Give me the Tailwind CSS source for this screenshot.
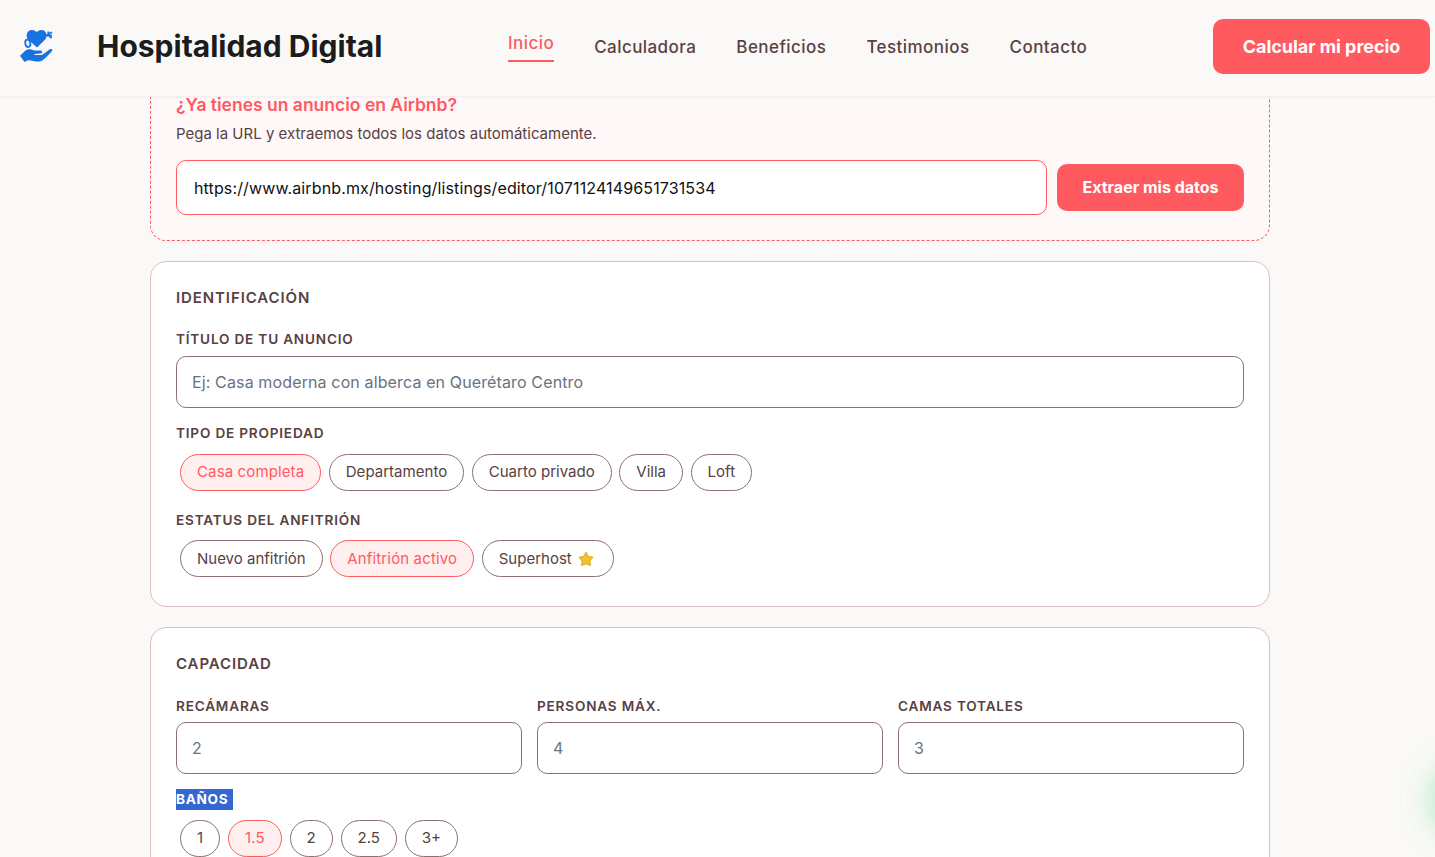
<!DOCTYPE html>
<html lang="es">
  <head>
    <meta charset="utf-8" />
    <title>Hospitalidad Digital</title>
    <meta name="viewport" content="width=device-width, initial-scale=1" />
    <script src="https://cdn.jsdelivr.net/npm/@tailwindcss/browser@4"></script>
  </head>

  <body class="h-screen overflow-hidden bg-[#faf9f7] font-['Inter',sans-serif] text-[#594142]">
    <header class="relative z-10 flex h-[97px] items-start border-b border-[#f3f0ef] bg-[#fbf9f8] pl-5 shadow-[0_1px_2px_rgba(0,0,0,0.03)]">
      <!-- Logo -->
      <svg class="mt-[29px] h-[34px] w-[33px] shrink-0" viewBox="0 0 33 34" fill="none">
        <path d="M17 18.500L8.500 10.800C6 8 6.300 4.300 8.300 2.400C10.800.2 14.500.5 16.700 3.200C19 .5 22.700.2 25 2.400C27 4.300 27.300 8 25 10.800z" fill="#1673e0" />
        <ellipse cx="7.800" cy="14.300" rx="2.500" ry="3.700" transform="rotate(-12 7.800 14.300)" fill="#fbf9f8" stroke="#1673e0" stroke-width="1.800" />
        <path d="M24.500 7.500L32 3.200M28.300 5.500V2.500M28 5.500l3.500 3.600M26.500 6.300l5.500.3" stroke="#1673e0" stroke-width="1.800" />
        <path d="M0 26.800L5.500 21.500C7.500 20 9.500 20 11.500 20.600L14 21.500H20.500C22.500 21.500 22.800 24.300 20.800 24.500L14.500 25V26H21.500C23.500 25.500 27.500 21.500 30 20.200C31.500 19.300 33 20.500 32.200 21.800C29 25.300 26 29 22 31.800C20.500 32.800 17 32.600 14.500 32.200L9.500 31.200C7.500 31 6 32 4.500 33z" fill="#1673e0" />
      </svg>
      <span class="mt-[26px] ml-11 w-[411px] text-[30px] leading-10 font-bold whitespace-nowrap text-[#1b1c1b]">Hospitalidad Digital</span>
      <nav class="mt-[31px] flex w-[705px] gap-10 text-[17px] leading-8 font-medium tracking-[0.44px]">
        <a class="-mt-[4px] h-[35px] border-b-2 border-[#ff5a5f] text-[#ff5a5f]">Inicio</a>
        <a>Calculadora</a>
        <a>Beneficios</a>
        <a>Testimonios</a>
        <a>Contacto</a>
      </nav>
      <button class="mt-[19px] h-[55px] w-[217px] shrink-0 rounded-[10px] bg-[#ff5a5f] text-lg font-bold tracking-[-0.05px] text-white">Calcular mi precio</button>
    </header>

    <main class="ml-[150px] flex w-[1120px] flex-col">
      <!-- Airbnb import -->
      <section class="-mt-[30px] mb-5 rounded-2xl border border-dashed border-[#ff5a5f] bg-[#fff8f8] p-[25px]">
        <h2 class="text-[17.5px] leading-6 font-semibold text-[#ff5a5f]">¿Ya tienes un anuncio en Airbnb?</h2>
        <p class="mt-[5px] text-[15px] leading-6">Pega la URL y extraemos todos los datos automáticamente.</p>
        <div class="mt-3.5 flex items-center gap-2.5">
          <input class="h-[55px] w-[871px] rounded-[10px] border border-[#ff5a5f] bg-white px-[17px] text-base tracking-[0.13px] text-[#111]" value="https://www.airbnb.mx/hosting/listings/editor/1071124149651731534" />
          <button class="h-[47px] w-[187px] rounded-[10px] bg-[#ff5a5f] pb-0.5 text-base font-bold text-white">Extraer mis datos</button>
        </div>
      </section>

      <!-- Identificación -->
      <section class="mb-5 rounded-2xl border border-[#e1bebd] bg-white px-[25px] pt-[25px] pb-[29px]">
        <h3 class="text-[15px] leading-[22px] font-semibold tracking-[0.9px]">IDENTIFICACIÓN</h3>
        <label class="mt-5 block text-[13.6px] leading-5 font-semibold tracking-[0.8px]">TÍTULO DE TU ANUNCIO</label>
        <input class="mt-[7px] block h-[52px] w-full rounded-[10px] border border-[#8d7071] px-[15px] text-base tracking-[0.13px] placeholder:text-gray-500" placeholder="Ej: Casa moderna con alberca en Querétaro Centro" />
        <label class="mt-[15px] block text-[13.6px] leading-5 font-semibold tracking-[0.8px]">TIPO DE PROPIEDAD</label>
        <div class="mt-[11px] ml-1 flex gap-[7.5px] text-[15.05px] leading-[33px]">
          <span class="rounded-full border border-[#ff5a5f] bg-[#ffefef] px-4 pb-0.5 tracking-[0.1px] text-[#ff5a5f]">Casa completa</span>
          <span class="rounded-full border border-[#8d7071] px-4 pb-0.5">Departamento</span>
          <span class="rounded-full border border-[#8d7071] px-4 pb-0.5">Cuarto privado</span>
          <span class="rounded-full border border-[#8d7071] px-4 pb-0.5">Villa</span>
          <span class="rounded-full border border-[#8d7071] px-4 pb-0.5">Loft</span>
        </div>
        <label class="mt-[19px] block text-[13.6px] leading-5 font-semibold tracking-[0.8px]">ESTATUS DEL ANFITRIÓN</label>
        <div class="mt-2.5 ml-1 flex gap-[7.6px] text-[15px] leading-[35px]">
          <span class="rounded-full border border-[#8d7071] px-4">Nuevo anfitrión</span>
          <span class="rounded-full border border-[#ff5a5f] bg-[#ffefef] px-4 tracking-[0.14px] text-[#ff5a5f]">Anfitrión activo</span>
          <span class="flex w-[132px] items-center rounded-full border border-[#8d7071] px-4">
            Superhost
            <svg class="ml-[6px] h-4 w-4" viewBox="0 0 16 16">
              <path d="M8 1.500L10 5.500L14.500 6.300L11.700 9.700L12.300 14.300L8 12.500L3.700 14.300L4.300 9.700L1.500 6.300L6 5.500z" fill="#ecc436" stroke="#e6b730" stroke-width="1.600" stroke-linejoin="round" />
            </svg>
          </span>
        </div>
      </section>

      <!-- Capacidad -->
      <section class="rounded-2xl border border-[#e1bebd] bg-white p-[25px]">
        <h3 class="text-[15px] leading-[22px] font-semibold tracking-[0.9px]">CAPACIDAD</h3>
        <div class="mt-[21px] grid grid-cols-3 gap-[15px]">
          <div>
            <label class="block text-[13.6px] leading-5 font-semibold tracking-[0.8px]">RECÁMARAS</label>
            <input class="mt-1.5 block h-[52px] w-full rounded-[10px] border border-[#8d7071] px-[15px] text-base placeholder:text-gray-500" placeholder="2" />
          </div>
          <div>
            <label class="block text-[13.6px] leading-5 font-semibold tracking-[0.8px]">PERSONAS MÁX.</label>
            <input class="mt-1.5 block h-[52px] w-full rounded-[10px] border border-[#8d7071] px-[15px] text-base placeholder:text-gray-500" placeholder="4" />
          </div>
          <div>
            <label class="block text-[13.6px] leading-5 font-semibold tracking-[0.8px]">CAMAS TOTALES</label>
            <input class="mt-1.5 block h-[52px] w-full rounded-[10px] border border-[#8d7071] px-[15px] text-base placeholder:text-gray-500" placeholder="3" />
          </div>
        </div>
        <label class="mt-[15px] block w-[57px] bg-[#3367d1] text-[13.6px] leading-[21px] font-bold tracking-[0.7px] text-white">BAÑOS</label>
        <div class="mt-2.5 ml-1 flex gap-[7.8px] text-[15.05px] leading-[33px]">
          <span class="rounded-full border border-[#8d7071] px-4 pb-0.5">1</span>
          <span class="rounded-full border border-[#ff5a5f] bg-[#ffefef] px-4 pb-0.5 tracking-[0.15px] text-[#ff5a5f]">1.5</span>
          <span class="rounded-full border border-[#8d7071] px-4 pb-0.5">2</span>
          <span class="rounded-full border border-[#8d7071] px-4 pb-0.5">2.5</span>
          <span class="rounded-full border border-[#8d7071] px-4 pb-0.5">3+</span>
        </div>
      </section>
    </main>

    <!-- Glow of the chat button -->
    <div class="fixed top-[770px] -right-[62px] h-[60px] w-[60px] rounded-full shadow-[0_0_32px_4px_rgba(37,211,102,0.4)]"></div>
  </body>
</html>
